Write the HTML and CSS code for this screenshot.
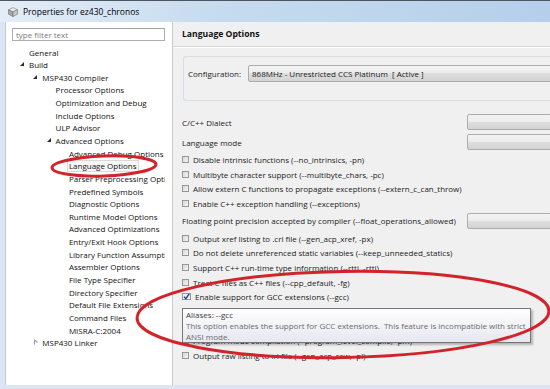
FILE: index.html
```html
<!DOCTYPE html>
<html>
<head>
<title>Properties for ez430_chronos</title>
<link rel="stylesheet" href="styles.css">
</head>
<body>
<div class="window">
  <div class="titlebar">
    <svg class="app-icon" width="10" height="10" viewBox="0 0 10 10">
      <polygon points="5,0.5 9.5,2.8 5,5 0.5,2.8" fill="#e8e8e8" stroke="#7d7d7d" stroke-width="0.6"/>
      <polygon points="0.5,2.8 5,5 5,9.5 0.5,7.2" fill="#a9a9a9" stroke="#6f6f6f" stroke-width="0.6"/>
      <polygon points="9.5,2.8 5,5 5,9.5 9.5,7.2" fill="#c9c9c9" stroke="#6f6f6f" stroke-width="0.6"/>
    </svg>
    <span>Properties for ez430_chronos</span>
  </div>

  <div class="client">
    <div class="nav">
      <div class="filter">type filter text</div>
      <ul class="tree">
        <li class="lvl0"><i class="twist"></i>General</li>
        <li class="lvl0"><i class="twist open"></i>Build</li>
        <li class="lvl1"><i class="twist open"></i>MSP430 Compiler</li>
        <li class="lvl2"><i class="twist"></i>Processor Options</li>
        <li class="lvl2"><i class="twist"></i>Optimization and Debug</li>
        <li class="lvl2"><i class="twist"></i>Include Options</li>
        <li class="lvl2"><i class="twist"></i>ULP Advisor</li>
        <li class="lvl2"><i class="twist open"></i>Advanced Options</li>
        <li class="lvl3"><i class="twist"></i>Advanced Debug Options</li>
        <li class="lvl3"><i class="twist"></i><span class="selected">Language Options</span></li>
        <li class="lvl3"><i class="twist"></i>Parser Preprocessing Options</li>
        <li class="lvl3"><i class="twist"></i>Predefined Symbols</li>
        <li class="lvl3"><i class="twist"></i>Diagnostic Options</li>
        <li class="lvl3"><i class="twist"></i>Runtime Model Options</li>
        <li class="lvl3"><i class="twist"></i>Advanced Optimizations</li>
        <li class="lvl3"><i class="twist"></i>Entry/Exit Hook Options</li>
        <li class="lvl3"><i class="twist"></i>Library Function Assumptions</li>
        <li class="lvl3"><i class="twist"></i>Assembler Options</li>
        <li class="lvl3"><i class="twist"></i>File Type Specifier</li>
        <li class="lvl3"><i class="twist"></i>Directory Specifier</li>
        <li class="lvl3"><i class="twist"></i>Default File Extensions</li>
        <li class="lvl3"><i class="twist"></i>Command Files</li>
        <li class="lvl3"><i class="twist"></i>MISRA-C:2004</li>
        <li class="lvl1"><i class="twist closed"></i>MSP430 Linker</li>
      </ul>
    </div>

    <div class="page">
      <div class="page-title">Language Options</div>

      <div class="config">
        <span class="config-label">Configuration:</span>
        <div class="combo config-combo">868MHz - Unrestricted CCS Platinum&nbsp; [ Active ]</div>
      </div>

      <div class="options">
        <div class="opt-row"><span>C/C++ Dialect</span><div class="combo"></div></div>
        <div class="opt-row"><span>Language mode</span><div class="combo"></div></div>
        <div class="check"><span class="box"></span>Disable intrinsic functions (--no_intrinsics, -pn)</div>
        <div class="check"><span class="box"></span>Multibyte character support (--multibyte_chars, -pc)</div>
        <div class="check"><span class="box"></span>Allow extern C functions to propagate exceptions (--extern_c_can_throw)</div>
        <div class="check"><span class="box"></span>Enable C++ exception handling (--exceptions)</div>
        <div class="opt-row"><span>Floating point precision accepted by compiler (--float_operations_allowed)</span><div class="combo"></div></div>
        <div class="check"><span class="box"></span>Output xref listing to .crl file (--gen_acp_xref, -px)</div>
        <div class="check"><span class="box"></span>Do not delete unreferenced static variables (--keep_unneeded_statics)</div>
        <div class="check"><span class="box"></span>Support C++ run-time type information (--rtti, -rtti)</div>
        <div class="check"><span class="box"></span>Treat C files as C++ files (--cpp_default, -fg)</div>
        <div class="check"><span class="box checked"><svg width="7" height="7" viewBox="0 0 7 7"><path d="M1 3.6 L2.8 5.6 L6.2 1" fill="none" stroke="#24408e" stroke-width="1.4"/></svg></span>Enable support for GCC extensions (--gcc)</div>
        <!-- these two sit fully under the tooltip -->
        <div class="check covered"><span class="box"></span>Enable embedded C++ mode (--embedded_cpp, -pe)</div>
        <div class="check covered"><span class="box"></span>Output preprocessed source (--preproc_only, -ppo)</div>
        <div class="check"><span class="box"></span>Program mode compilation (--program_level_compile, -pm)</div>
        <div class="check"><span class="box"></span>Output raw listing to .rl file (--gen_acp_raw, -pl)</div>
      </div>
    </div>
  </div>

  <div class="tooltip">
    <div class="tip-head">Aliases: --gcc</div>
    <div class="tip-body">This option enables the support for GCC extensions.&nbsp; This feature is incompatible with strict ANSI mode.</div>
  </div>

  <svg class="marks" width="550" height="389" viewBox="0 0 550 389">
    <ellipse cx="104" cy="166" rx="52" ry="10" transform="rotate(-2 104 166)" fill="none" stroke="#d2232b" stroke-width="3"/>
    <ellipse cx="343" cy="314.5" rx="206" ry="43" transform="rotate(-1 343 314.5)" fill="none" stroke="#d2232b" stroke-width="3"/>
  </svg>
</div>
</body>
</html>
```

FILE: styles.css
```css
* {
  box-sizing: border-box;
}

body {
  margin: 0;
  background-color: #dae6f3;
}

.window {
  position: relative;
  width: 550px;
  height: 389px;
  overflow: hidden;
  background-color: #dae6f3;
  font-family: "Open Sans", "Noto Sans", sans-serif;
  color: #1b1b1b;
}

.titlebar {
  height: 22px;
  display: flex;
  align-items: center;
  gap: 5px;
  padding-left: 8px;
  border-top: 1px solid #4c5661;
  background: linear-gradient(90deg, #e4edf7, #c6dbef 40%, #b5cfeb);
  font-size: 8.5px;
  color: #000;
}

.client {
  display: flex;
  height: 363px;
  margin-left: 5px;
}

/* left side: filter + tree */
.nav {
  width: 168px;
  background-color: #fff;
  border-left: 1px solid #c0c8d2;
  border-right: 1px solid #cacaca;
  padding: 6px 7px 0 6px;
}

.filter {
  height: 13px;
  border: 1px solid #abadb3;
  border-top-color: #9fa2a8;
  padding-left: 3px;
  font-size: 8px;
  line-height: 11px;
  color: #7b7b7b;
}

.tree {
  list-style: none;
  margin: 0;
  padding: 4.7px 0 0;
  overflow: hidden;
}

.tree li {
  display: flex;
  align-items: center;
  height: 12.65px;
  font-size: 8px;
  white-space: nowrap;
  color: #111;
}

.tree .lvl0 { padding-left: 8px; }
.tree .lvl1 { padding-left: 21.3px; }
.tree .lvl2 { padding-left: 34.6px; }
.tree .lvl3 { padding-left: 47.9px; }

.twist {
  flex: 0 0 9px;
  height: 7px;
  position: relative;
}

.twist.open::before {
  content: "";
  position: absolute;
  left: 0;
  top: 1px;
  border-style: solid;
  border-width: 0 0 4px 4px;
  border-color: transparent transparent #2a2a2a transparent;
}

.twist.closed::before {
  content: "";
  position: absolute;
  left: 1px;
  top: 0;
  width: 0;
  height: 0;
  border-style: solid;
  border-width: 3.5px 0 3.5px 4px;
  border-color: transparent transparent transparent #9a9a9a;
}

.twist.closed::after {
  content: "";
  position: absolute;
  left: 2px;
  top: 1.5px;
  border-style: solid;
  border-width: 2px 0 2px 2.2px;
  border-color: transparent transparent transparent #fff;
}

.selected {
  margin-left: -2px;
  padding: 0 1px;
  border: 1px solid #d9d9d9;
  background-color: #f7f7f7;
  line-height: 10px;
}

/* right side: property page */
.page {
  flex: 1;
  background-color: #f0f0f0;
  padding-left: 9px;
  overflow: hidden;
  font-size: 8px;
}

.page-title {
  height: 25px;
  margin-left: -9px;
  padding-left: 9px;
  display: flex;
  align-items: center;
  font-size: 8.6px;
  font-weight: 700;
  color: #111;
  border-bottom: 1px solid #d4d4d4;
  box-shadow: 0 1px 0 #fff;
}

.config {
  width: 420px;
  height: 45px;
  margin: 9px 0 0 1px;
  padding: 8px 0 0 4px;
  display: flex;
  align-items: flex-start;
  gap: 6px;
  border: 1px solid #d5dfe5;
  border-right: none;
  border-radius: 3px 0 0 3px;
}

.config-label {
  flex: 0 0 54px;
  line-height: 17px;
  white-space: nowrap;
}

.combo {
  height: 16px;
  border: 1px solid #adadad;
  border-radius: 2px;
  background: linear-gradient(#f3f3f3, #ececec 50%, #dedede 50%, #d3d3d3);
  padding-left: 3px;
  line-height: 14px;
  white-space: nowrap;
}

.config-combo {
  flex: 1;
  height: 17px;
  line-height: 15px;
}

.options {
  margin-top: 11px;
}

.opt-row {
  display: grid;
  grid-template-columns: 285px 100px;
  align-items: center;
  height: 20px;
  white-space: nowrap;
}

.check {
  display: flex;
  align-items: center;
  gap: 4px;
  height: 14.7px;
  white-space: nowrap;
}

.check.covered {
  visibility: hidden;
}

.box {
  flex: 0 0 7px;
  height: 7px;
  border: 1px solid #979797;
  background: linear-gradient(135deg, #d9d9d9, #f4f4f4);
  display: flex;
  align-items: center;
  justify-content: center;
}

.box.checked {
  background: #f4f4f4;
}

.box svg {
  display: block;
}

/* hover help over the option list */
.tooltip {
  position: absolute;
  left: 182px;
  top: 308px;
  width: 349px;
  height: 35px;
  padding: 0 3px;
  border: 1px solid #767676;
  background: linear-gradient(#ffffff, #e6e7f0);
  box-shadow: 2px 2px 2px rgba(0, 0, 0, 0.25);
  font-size: 8px;
  line-height: 11px;
}

.tip-head {
  color: #3a3a3a;
}

.tip-body {
  color: #6a6a6a;
}

/* red hand-drawn highlight rings */
.marks {
  position: absolute;
  left: 0;
  top: 0;
  pointer-events: none;
}
```
